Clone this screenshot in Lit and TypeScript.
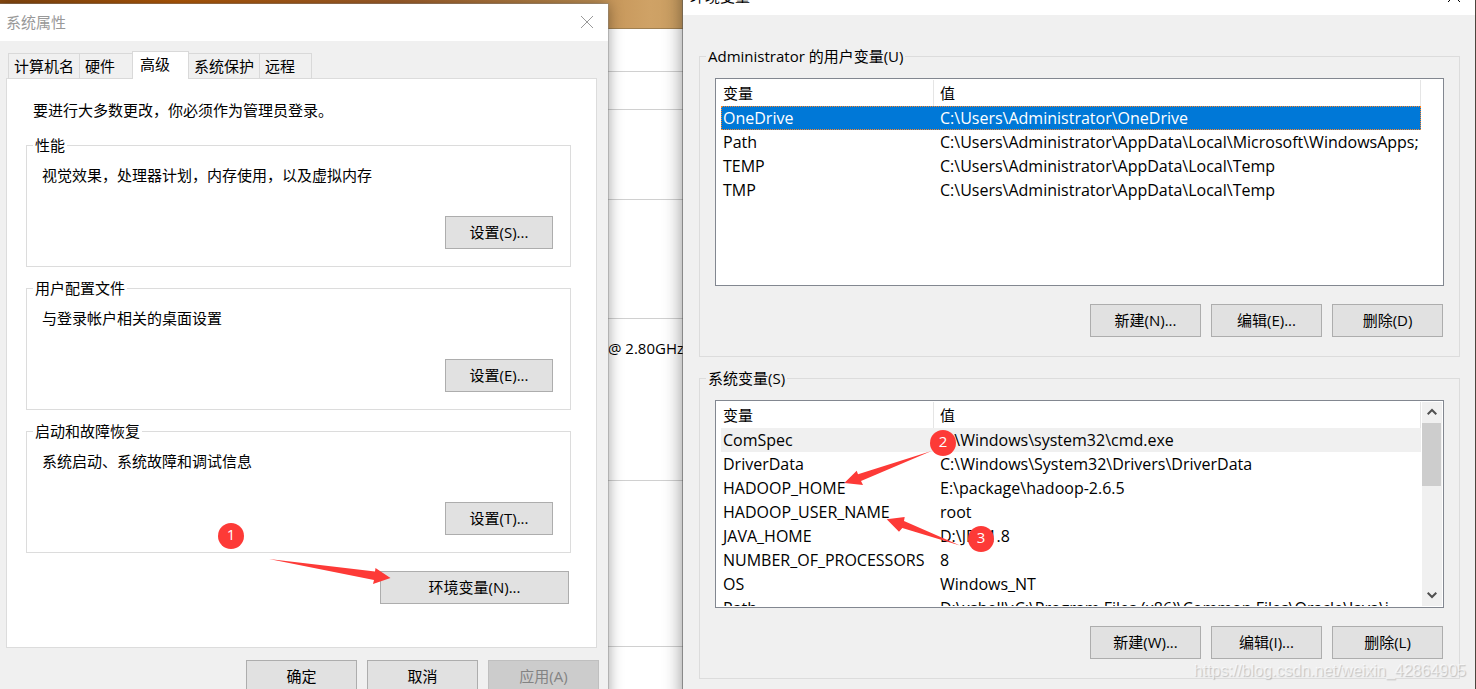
import { LitElement, html, css, nothing } from "lit";
import { customElement, property } from "lit/decorators.js";

const shared = css`
  * {
    box-sizing: border-box;
  }
  button {
    font: inherit;
    color: #000;
    background: #e1e1e1;
    border: 1px solid #adadad;
    border-radius: 0;
    height: 33px;
    padding: 0 0 2px;
    width: 111px;
    flex: none;
    white-space: nowrap;
  }
  button:disabled {
    color: #838383;
    background: #ccc;
    border-color: #bfbfbf;
  }
  fieldset {
    margin: 0;
    min-width: 0;
    border: 1px solid #dcdcdc;
  }
  legend {
    height: 20px;
    padding: 0 2px;
  }
`;

const tabs = ["计算机名", "硬件", "高级", "系统保护", "远程"];

const sections = [
  { title: "性能", text: "视觉效果，处理器计划，内存使用，以及虚拟内存", button: "设置(S)..." },
  { title: "用户配置文件", text: "与登录帐户相关的桌面设置", button: "设置(E)..." },
  { title: "启动和故障恢复", text: "系统启动、系统故障和调试信息", button: "设置(T)..." },
];

const userVars = [
  ["OneDrive", "C:\\Users\\Administrator\\OneDrive"],
  ["Path", "C:\\Users\\Administrator\\AppData\\Local\\Microsoft\\WindowsApps;"],
  ["TEMP", "C:\\Users\\Administrator\\AppData\\Local\\Temp"],
  ["TMP", "C:\\Users\\Administrator\\AppData\\Local\\Temp"],
];

const systemVars = [
  ["ComSpec", "C:\\Windows\\system32\\cmd.exe"],
  ["DriverData", "C:\\Windows\\System32\\Drivers\\DriverData"],
  ["HADOOP_HOME", "E:\\package\\hadoop-2.6.5"],
  ["HADOOP_USER_NAME", "root"],
  ["JAVA_HOME", "D:\\JDK1.8"],
  ["NUMBER_OF_PROCESSORS", "8"],
  ["OS", "Windows_NT"],
  ["Path", "D:\\xshell\\;C:\\Program Files (x86)\\Common Files\\Oracle\\Java\\j..."],
];

@customElement("title-bar")
class TitleBar extends LitElement {
  @property() label = "";
  static styles = [
    shared,
    css`
      :host {
        box-sizing: border-box;
        display: flex;
        align-items: center;
        justify-content: space-between;
        height: 37px;
        padding: 0 14px 2px 6px;
        background: #fff;
      }
      button {
        display: flex;
        width: 14px;
        height: 14px;
        padding: 0;
        border: 0;
        background: none;
        color: inherit;
      }
    `,
  ];
  render() {
    return html`<span>${this.label}</span>
      <button aria-label="关闭">
        <svg width="14" height="14" viewBox="0 0 14 14" stroke="currentColor" fill="none">
          <path d="M1 1 13 13M13 1 1 13" />
        </svg>
      </button>`;
  }
}

@customElement("variable-list")
class VariableList extends LitElement {
  @property({ attribute: false }) rows: string[][] = [];
  @property() mark = "selected";
  @property({ type: Boolean }) scrollable = false;
  static styles = [
    shared,
    css`
      :host {
        box-sizing: border-box;
        display: grid;
        grid-template-columns: minmax(0, 1fr) 20px;
        gap: 1px;
        height: 208px;
        padding: 1px 1px 1px 5px;
        background: #fff;
        border: 1px solid #828790;
        overflow: hidden;
      }
      .view {
        height: 204px;
        overflow: hidden;
      }
      table {
        width: 100%;
        table-layout: fixed;
        border-collapse: separate;
        border-spacing: 0;
      }
      th,
      td {
        height: 24px;
        padding: 0 2px;
        line-height: 24px;
        text-align: left;
        font-weight: 400;
        white-space: nowrap;
        overflow: hidden;
      }
      td {
        font-size: 16px;
      }
      th {
        height: 26px;
        line-height: 26px;
        border-right: 1px solid #e5e5e5;
      }
      th:first-child {
        width: 213px;
      }
      th + th,
      td + td {
        padding-left: 6px;
      }
      .selected {
        color: #fff;
        background: #0078d7;
        outline: 1px dotted #ff8728;
        outline-offset: -1px;
      }
      .inactive {
        background: #f0f0f0;
      }
      .bar {
        display: flex;
        flex-direction: column;
        background: #f0f0f0;
      }
      .bar button {
        display: grid;
        place-items: center;
        width: 19px;
        height: 21px;
        border: 0;
        background: none;
      }
      .thumb {
        width: 19px;
        height: 63px;
        margin-bottom: auto;
        background: #cdcdcd;
      }
    `,
  ];
  render() {
    return html`<div class="view">
        <table>
          <thead>
            <tr><th>变量</th><th>值</th></tr>
          </thead>
          <tbody>
            ${this.rows.map(
              ([name, value], i) =>
                html`<tr class=${i === 0 ? this.mark : ""}><td>${name}</td><td>${value}</td></tr>`
            )}
          </tbody>
        </table>
      </div>
      ${this.scrollable
        ? html`<div class="bar">
            <button aria-label="向上滚动">
              <svg width="10" height="8" viewBox="0 0 10 8" fill="none" stroke="#505050" stroke-width="2"><path d="M.7 6.3 5 2 9.300 6.300" /></svg>
            </button>
            <div class="thumb"></div>
            <button aria-label="向下滚动">
              <svg width="10" height="8" viewBox="0 0 10 8" fill="none" stroke="#505050" stroke-width="2"><path d="M.7 1.700 5 6 9.300 1.700" /></svg>
            </button>
          </div>`
        : nothing}`;
  }
}

@customElement("system-properties")
class SystemProperties extends LitElement {
  static styles = [
    shared,
    css`
      :host {
        display: block;
        position: relative;
        background: #f0f0f0;
      }
      title-bar {
        color: #999;
      }
      .body {
        padding: 10px 11px 0 6px;
      }
      .tabs {
        display: flex;
        align-items: flex-end;
        padding-left: 2px;
        margin-bottom: -1px;
        position: relative;
      }
      .tabs button {
        width: auto;
        height: 26px;
        padding: 0 5px;
        text-align: left;
        background: #f0f0f0;
        border: 1px solid #d9d9d9;
        border-right-width: 0;
      }
      .tabs .short {
        width: 53px;
      }
      .tabs .short.active {
        width: 57px;
        height: 28px;
        padding: 0 7px 3px;
        background: #fff;
        border-right-width: 1px;
        border-bottom: 0;
      }
      .tabs .active + button {
        border-left: 0;
      }
      .tabs button:last-child {
        border-right-width: 1px;
      }
      .pane {
        display: flex;
        flex-direction: column;
        gap: 11px;
        padding: 21px 25px 43px 19px;
        background: #fff;
        border: 1px solid #dcdcdc;
      }
      .intro {
        margin: 0 0 4px 7px;
      }
      fieldset {
        display: flex;
        flex-direction: column;
        gap: 31px;
        padding: 10px 17px 17px 15px;
      }
      legend {
        margin-left: -9px;
      }
      p {
        margin: 0;
      }
      fieldset button {
        width: 108px;
        align-self: flex-end;
      }
      .env {
        width: 189px;
        align-self: flex-end;
        margin: 7px 2px 0 0;
      }
      .actions {
        display: flex;
        justify-content: flex-end;
        gap: 10px;
        padding: 12px 9px 12px 0;
      }
      .note {
        position: absolute;
        left: 210px;
        top: 516px;
      }
    `,
  ];
  render() {
    return html`<title-bar label="系统属性"></title-bar>
      <div class="body">
        <div class="tabs" role="tablist">
          ${tabs.map(
            (t) =>
              html`<button role="tab" aria-selected=${t === "高级"}
                class="${t.length === 2 ? "short" : ""} ${t === "高级" ? "active" : ""}">${t}</button>`
          )}
        </div>
        <div class="pane">
          <p class="intro">要进行大多数更改，你必须作为管理员登录。</p>
          ${sections.map(
            (s) => html`<fieldset>
              <legend>${s.title}</legend>
              <p>${s.text}</p>
              <button>${s.button}</button>
            </fieldset>`
          )}
          <button class="env">环境变量(N)...</button>
        </div>
      </div>
      <div class="actions">
        <button>确定</button>
        <button>取消</button>
        <button disabled>应用(A)</button>
      </div>
      <svg class="note" width="190" height="70" viewBox="210 520 190 70" fill="#fd3a37">
        <circle cx="231" cy="536" r="13" />
        <text x="231" y="540" text-anchor="middle" fill="#fff">1</text>
        <path d="M269 559 375 571.500 375.500 568 390.500 578 373 584 374 580Z" />
      </svg>`;
  }
}

@customElement("environment-variables")
class EnvironmentVariables extends LitElement {
  static styles = [
    shared,
    css`
      :host {
        display: block;
        position: relative;
        background: #f0f0f0;
      }
      title-bar {
        padding-left: 7px;
      }
      .body {
        display: flex;
        flex-direction: column;
        gap: 11px;
        padding: 31px 15px 20px 16px;
      }
      fieldset {
        padding: 12px 15px 19px;
      }
      legend {
        margin-left: -9px;
      }
      .actions {
        display: flex;
        justify-content: flex-end;
        gap: 10px;
        padding: 18px 1px 0 0;
      }
      .note {
        position: absolute;
        left: 157px;
        top: 442px;
      }
    `,
  ];
  render() {
    return html`<title-bar label="环境变量"></title-bar>
      <div class="body">
        <fieldset>
          <legend>Administrator 的用户变量(U)</legend>
          <variable-list .rows=${userVars}></variable-list>
          <div class="actions">
            <button>新建(N)...</button><button>编辑(E)...</button><button>删除(D)</button>
          </div>
        </fieldset>
        <fieldset>
          <legend>系统变量(S)</legend>
          <variable-list .rows=${systemVars} mark="inactive" scrollable></variable-list>
          <div class="actions">
            <button>新建(W)...</button><button>编辑(I)...</button><button>删除(L)</button>
          </div>
        </fieldset>
      </div>
      <svg class="note" width="160" height="140" viewBox="840 420 160 140" fill="#fd3a37">
        <path d="M931.500 451 858 474.300 856.700 470.700 844.300 483 863 485 861 481Z" />
        <path d="M960 545.500 904 521 904.700 517 886.700 519.300 899 531.700 902.300 528Z" />
        <circle cx="943" cy="443" r="13" />
        <circle cx="981" cy="539" r="13" />
        <text x="943" y="447" text-anchor="middle" fill="#fff">2</text>
        <text x="981" y="543" text-anchor="middle" fill="#fff">3</text>
      </svg>`;
  }
}

@customElement("app-root")
class AppRoot extends LitElement {
  static styles = css`
    :host {
      box-sizing: border-box;
      display: grid;
      grid-template-columns: minmax(0, 608fr) minmax(0, 75fr) minmax(0, 792fr);
      position: relative;
      height: 100vh;
      padding-right: 1px;
      overflow: hidden;
      font: 15px/20px "Open Sans", "Noto Sans CJK SC", sans-serif;
      color: #000;
      background: linear-gradient(90deg, #8a4a10 0, #b85c08 12%, #a5622c 27%, #b98548 37%, #cfa266 44%, #c79c60 47%, #5a4632 50%);
    }
    system-properties {
      margin-top: 4px;
      z-index: 1;
      box-shadow: 0 0 0 1px #8886, 0 0 14px #0006;
    }
    environment-variables {
      margin-top: -22px;
      z-index: 2;
      box-shadow: 0 0 0 1px #5558, 0 0 18px #0007;
    }
    .behind {
      display: flex;
      flex-direction: column;
      margin-top: 28px;
      background: #fff;
      border-top: 1px solid #a08050;
      white-space: nowrap;
    }
    .behind div {
      box-sizing: border-box;
      flex: none;
      border-bottom: 1px solid #d0d0d0;
    }
    .a { height: 43px; }
    .b { height: 38px; }
    .c { height: 90px; }
    .d { height: 119px; }
    .e { height: 162px; padding-top: 19px; }
    .f { height: 166px; }
    .mark {
      position: absolute;
      right: 10px;
      bottom: 7px;
      z-index: 3;
      font: 16px/22px "Liberation Sans", sans-serif;
      color: #fff9;
      text-shadow: 1px 1px 1px #0003;
    }
  `;
  render() {
    return html`<system-properties></system-properties>
      <div class="behind">
        <div class="a"></div>
        <div class="b"></div>
        <div class="c"></div>
        <div class="d"></div>
        <div class="e">@ 2.80GHz</div>
        <div class="f"></div>
      </div>
      <environment-variables></environment-variables>
      <span class="mark">https://blog.csdn.net/weixin_42864905</span>`;
  }
}
